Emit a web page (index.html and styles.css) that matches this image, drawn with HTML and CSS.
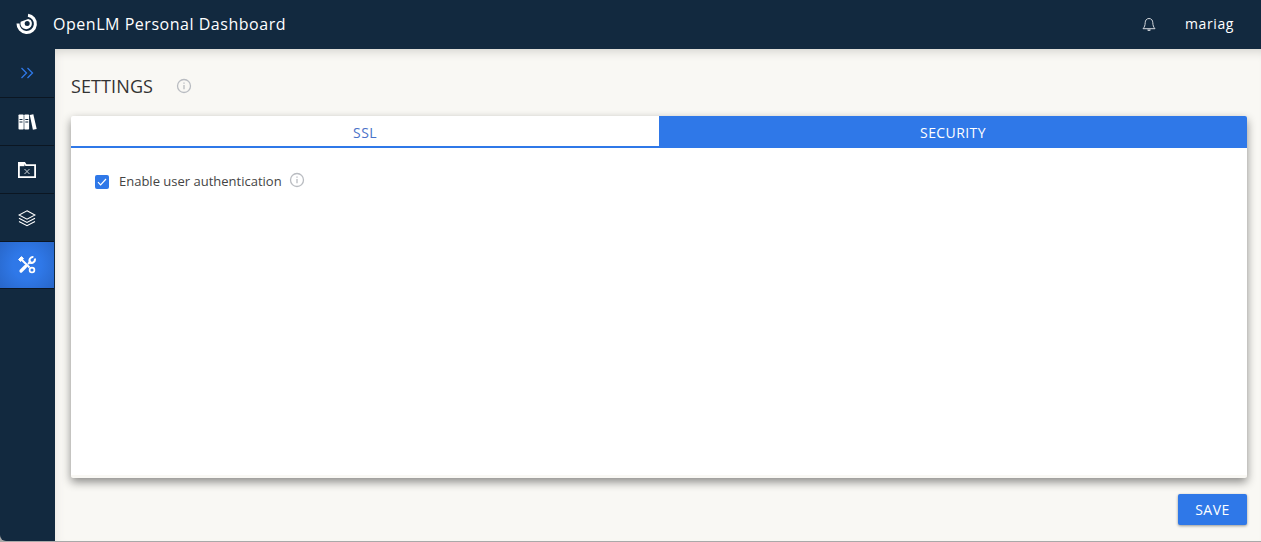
FILE: index.html
```html
<!DOCTYPE html>
<html lang="en">
<head>
    <meta charset="UTF-8">
    <title>OpenLM Personal Dashboard</title>
    <link rel="stylesheet" href="styles.css">
</head>
<body>

<div class="app">
    <div class="topbar">
        <svg class="logo" width="22" height="22" viewBox="0 0 22 22">
            <path d="M12 2.200a8.700 8.700 0 1 1-10 8.300" fill="none" stroke="#fff" stroke-width="3"/>
            <path d="M5 8a5.700 5.700 0 1 0 9.900-1.900L12.500 5.300z" fill="#fff" transform="translate(-.3 .8)"/>
            <circle cx="11.200" cy="10.500" r="2.500" fill="#12293f"/>
        </svg>
        <span class="app-title">OpenLM Personal Dashboard</span>
        <svg class="bell" width="16" height="16" viewBox="0 0 16 16" fill="none" stroke="#d5d9de" stroke-width="1">
            <path d="M8 1.500c-2.600 0-3.700 2-3.800 4.200-.1 2.600-.7 4.400-2.200 6h12c-1.500-1.600-2.100-3.400-2.200-6C11.700 3.500 10.600 1.500 8 1.500z"/>
            <path d="M6.700 12.500a1.400 1.400 0 0 0 2.600 0" stroke-width="1.300"/>
        </svg>
        <span class="user">mariag</span>
    </div>

    <div class="main">
        <div class="sidebar">
            <div class="nav-item">
                <svg width="14" height="12" viewBox="0 0 14 12" fill="none" stroke="#2f78e8" stroke-width="1.300">
                    <path d="M1.500 1l5 5-5 5M7.500 1l5 5-5 5"/>
                </svg>
            </div>
            <div class="nav-item">
                <svg width="19" height="16" viewBox="0 0 19 16" fill="#fff">
                    <rect x="0.500" y="0.500" width="5.200" height="15" rx="0.800"/>
                    <rect x="6.300" y="0.500" width="4.800" height="15" rx="0.800"/>
                    <path d="M11.800 1l3.500-.8 3.400 14.800-3.800.8z"/>
                    <path d="M1.500 5.500h3M1.500 8h3M7.300 5.500h3M7.300 8h3" stroke="#12293f" stroke-width="1"/>
                </svg>
            </div>
            <div class="nav-item">
                <svg width="18" height="16" viewBox="0 0 18 16" fill="none" stroke="#fff" stroke-width="1.800">
                    <path d="M.9 15.100V1h5.600l1.500 2.200h9.100v11.900z"/>
                    <path d="M1 2h5.500v2.200H1z" fill="#fff" stroke="none"/>
                    <path d="M6.500 7l5 5M11.500 7l-5 5" stroke="#c8ced4" stroke-width="1"/>
                </svg>
            </div>
            <div class="nav-item">
                <svg class="layers" width="18" height="17" viewBox="0 0 18 17" fill="none" stroke="#fff" stroke-width="1.100">
                    <path d="M9 .8L17 5l-8 4.200L1 5z"/>
                    <path d="M1 8.200l8 4.200 8-4.200"/>
                    <path d="M1 11.500l8 4.200 8-4.200"/>
                </svg>
            </div>
            <div class="nav-item active">
                <svg width="18" height="18" viewBox="0 0 18 18" fill="none" stroke="#fff">
                    <path d="M2 2l9.500 9.500" stroke-width="2"/>
                    <path d="M.6 3.500L3.500.6l2 2L2.600 5.500z" fill="#fff" stroke-width="1"/>
                    <path d="M7.500 10.500L3 15" stroke-width="3.200" stroke-linecap="round"/>
                    <path d="M10 8l3-3" stroke-width="2"/>
                    <path d="M16.800 2.600a3.500 3.500 0 0 1-4.600 4.200M11.800 6.100a3.500 3.500 0 0 1 3.600-5" stroke-width="2"/>
                    <circle cx="14" cy="14" r="2.400" stroke-width="1.700"/>
                </svg>
            </div>
        </div>

        <div class="content">
            <div class="page-head">
                <h1>SETTINGS</h1>
                <svg class="info" width="16" height="16" viewBox="0 0 16 16">
                    <circle cx="8" cy="8" r="6.500" fill="none" stroke="#b9bcc1" stroke-width="1.300"/>
                    <path d="M8 7v4.200M8 4.600v1.200" stroke="#b9bcc1" stroke-width="1.300"/>
                </svg>
            </div>

            <div class="card">
                <div class="tabs">
                    <div class="tab">SSL</div>
                    <div class="tab selected">SECURITY</div>
                </div>
                <div class="card-body">
                    <span class="checkbox">
                        <svg width="10" height="8" viewBox="0 0 10 8" fill="none" stroke="#fff" stroke-width="1.200">
                            <path d="M1 4.200l2.600 2.600L9 1"/>
                        </svg>
                    </span>
                    <span class="check-label">Enable user authentication</span>
                    <svg class="info-small" width="16" height="16" viewBox="0 0 16 16">
                        <circle cx="8" cy="8" r="6.500" fill="none" stroke="#b9bcc1" stroke-width="1.300"/>
                        <path d="M8 7v4.200M8 4.600v1.200" stroke="#b9bcc1" stroke-width="1.300"/>
                    </svg>
                </div>
            </div>

            <div class="actions">
                <button class="save">SAVE</button>
            </div>
        </div>
    </div>
</div>

</body>
</html>
```

FILE: styles.css
```css
html, body {
    height: 100%;
}
body {
    font-family: "Open Sans", Arial, sans-serif;
    background-color: #a9a9a9;
    margin: 0;
    overflow: hidden;
}
.app {
    display: flex;
    flex-direction: column;
    height: 541px;
    background-color: #12293f;
    border-bottom-left-radius: 6px;
}
.topbar {
    height: 49px;
    flex-shrink: 0;
    display: flex;
    align-items: center;
    padding-left: 16px;
    color: #fff;
    background-color: #12293f;
}
.logo {
    margin-right: 15px;
    position: relative;
    top: -1px;
}
.app-title {
    font-size: 16px;
    font-weight: 500;
    letter-spacing: 0.53px;
    color: #fff;
    flex: 1;
    position: relative;
    top: -1px;
}
.bell {
    margin-right: 28px;
}
.user {
    font-size: 14px;
    font-weight: 500;
    letter-spacing: 0.6px;
    width: 76px;
    position: relative;
    top: -1px;
}
.main {
    flex: 1;
    display: flex;
    min-height: 0;
}
.sidebar {
    width: 55px;
    flex-shrink: 0;
}
.nav-item {
    height: 47px;
    width: 54px;
    border-bottom: 1px solid #0b1622;
    display: flex;
    align-items: center;
    justify-content: center;
}
.nav-item:first-child {
    height: 48px;
}
.nav-item.active {
    height: 46px;
    background: radial-gradient(circle, #2f78e8 40%, #2866c8 100%);
}
.layers {
    margin-top: 2px;
}
.content {
    flex: 1;
    display: flex;
    flex-direction: column;
    background-color: #f9f8f4;
    box-shadow: inset 0 10px 10px -7px #d6d5d1, inset 8px 0 8px -6px #eceae6;
    padding: 0 14px 0 16px;
}
.page-head {
    height: 67px;
    flex-shrink: 0;
    display: flex;
    align-items: center;
    padding-top: 6px;
    box-sizing: border-box;
}
.page-head h1 {
    margin: 0;
    font-size: 18px;
    font-weight: 400;
    letter-spacing: 0.1px;
    color: #333;
}
.info {
    margin-left: 23px;
}
.card {
    height: 359px;
    flex-shrink: 0;
    background-color: #fff;
    border-bottom: 3px solid #f9f8f4;
    box-shadow: 0 4px 10px rgba(0, 0, 0, 0.45);
    border-radius: 2px;
}
.tabs {
    display: flex;
    height: 32px;
}
.tab {
    flex: 1;
    border-bottom: 2px solid #2f78e8;
    font-size: 14px;
    line-height: 33px;
    letter-spacing: 0.4px;
    text-align: center;
    color: #4a72c8;
}
.tab.selected {
    background-color: #2f78e8;
    color: #fff;
    border-top-right-radius: 2px;
}
.card-body {
    display: flex;
    align-items: center;
    padding: 25px 24px;
}
.checkbox {
    width: 14px;
    height: 14px;
    background-color: #2f78e8;
    border-radius: 2px;
    display: flex;
    align-items: center;
    justify-content: center;
}
.check-label {
    font-size: 13px;
    color: #444;
    margin-left: 10px;
    margin-top: -1px;
}
.info-small {
    margin-left: 7px;
    position: relative;
    top: -2px;
}
.actions {
    display: flex;
    justify-content: flex-end;
    margin-top: 16px;
}
.save {
    width: 69px;
    height: 31px;
    border: none;
    border-radius: 2px;
    background-color: #2f78e8;
    color: #fff;
    font-family: inherit;
    font-size: 14px;
    letter-spacing: 0.5px;
    box-shadow: 0 1px 3px rgba(0, 0, 0, 0.4);
    cursor: pointer;
}
```
